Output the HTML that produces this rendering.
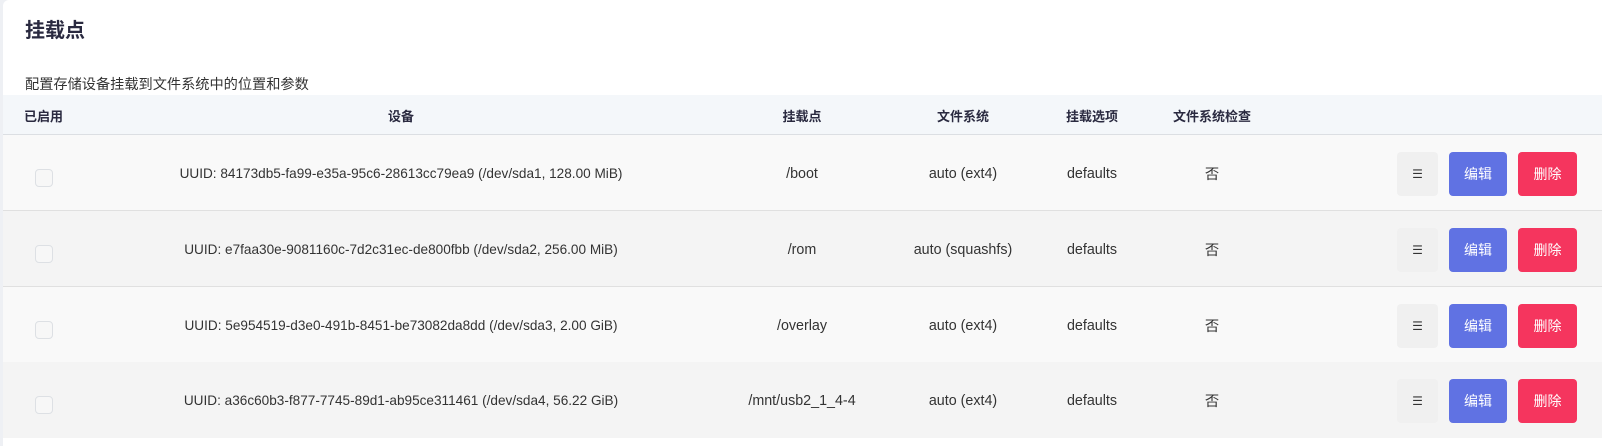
<!DOCTYPE html>
<html><head><meta charset="utf-8"><style>
*{margin:0;padding:0;box-sizing:border-box}
body{width:1602px;height:446px;background:#eef0f4;font-family:"Liberation Sans","Noto Sans CJK SC",sans-serif;color:#333;position:relative;overflow:hidden}
.card{position:absolute;left:3px;top:0;width:1599px;height:446px;background:#fff;border-radius:6px 0 0 0}
.t{position:absolute;white-space:nowrap}
.c{transform:translateX(-50%)}
.title{left:22px;top:14px;font-size:20px;font-weight:bold;color:#2a2a40}
.sub{left:22px;top:74px;font-size:14.2px;color:#333}
.head{position:absolute;left:0;top:95px;width:1599px;height:40px;background:#f4f7fa;border-bottom:1px solid #dcdfe3}
.head .t{top:11px;font-size:13px;font-weight:bold;color:#2a2a40}
.row{position:absolute;left:0;width:1599px;height:76px;border-bottom:1px solid #e0e0e0}
.row .t{top:31px;font-size:14.3px;color:#333}
.row .t.u{font-size:13.6px;top:31px}
.row .t.n{top:28px}
.cb{position:absolute;left:32px;top:34px;width:18px;height:18px;border:1px solid #dde0e4;border-radius:4px;background:#f7f7f7}
.b{position:absolute;top:17px;height:44px;border-radius:4px;color:#fff;font-size:14px;text-align:center;line-height:44px}
.b1{left:1394px;width:41px;background:#f0f0f0;color:#333;font-size:12px}
.b2{left:1446px;width:58px;background:#6072e3}
.b3{left:1515px;width:59px;background:#f5355e}
</style></head><body>
<div class="card">
<div class="t title">挂载点</div>
<div class="t sub">配置存储设备挂载到文件系统中的位置和参数</div>
<div class="head">
<div class="t" style="left:21px">已启用</div>
<div class="t c" style="left:398px">设备</div>
<div class="t c" style="left:799px">挂载点</div>
<div class="t c" style="left:960px">文件系统</div>
<div class="t c" style="left:1089px">挂载选项</div>
<div class="t c" style="left:1209px">文件系统检查</div>
</div>

<div class="row" style="top:135px;background:#f9f9f9">
<div class="cb"></div>
<div class="t c u" style="left:398px">UUID: 84173db5-fa99-e35a-95c6-28613cc79ea9 (/dev/sda1, 128.00 MiB)</div>
<div class="t c" style="left:799px">/boot</div>
<div class="t c" style="left:960px">auto (ext4)</div>
<div class="t c" style="left:1089px">defaults</div>
<div class="t c n" style="left:1209px">否</div>
<div class="b b1">☰</div><div class="b b2">编辑</div><div class="b b3">删除</div>
</div>
<div class="row" style="top:211px;background:#f4f4f4">
<div class="cb"></div>
<div class="t c u" style="left:398px">UUID: e7faa30e-9081160c-7d2c31ec-de800fbb (/dev/sda2, 256.00 MiB)</div>
<div class="t c" style="left:799px">/rom</div>
<div class="t c" style="left:960px">auto (squashfs)</div>
<div class="t c" style="left:1089px">defaults</div>
<div class="t c n" style="left:1209px">否</div>
<div class="b b1">☰</div><div class="b b2">编辑</div><div class="b b3">删除</div>
</div>
<div class="row" style="top:287px;background:#f9f9f9">
<div class="cb"></div>
<div class="t c u" style="left:398px">UUID: 5e954519-d3e0-491b-8451-be73082da8dd (/dev/sda3, 2.00 GiB)</div>
<div class="t c" style="left:799px">/overlay</div>
<div class="t c" style="left:960px">auto (ext4)</div>
<div class="t c" style="left:1089px">defaults</div>
<div class="t c n" style="left:1209px">否</div>
<div class="b b1">☰</div><div class="b b2">编辑</div><div class="b b3">删除</div>
</div>
<div class="row" style="top:362px;background:#f4f4f4;border-bottom:none">
<div class="cb"></div>
<div class="t c u" style="left:398px">UUID: a36c60b3-f877-7745-89d1-ab95ce311461 (/dev/sda4, 56.22 GiB)</div>
<div class="t c" style="left:799px">/mnt/usb2_1_4-4</div>
<div class="t c" style="left:960px">auto (ext4)</div>
<div class="t c" style="left:1089px">defaults</div>
<div class="t c n" style="left:1209px">否</div>
<div class="b b1">☰</div><div class="b b2">编辑</div><div class="b b3">删除</div>
</div>
</div>
</body></html>
